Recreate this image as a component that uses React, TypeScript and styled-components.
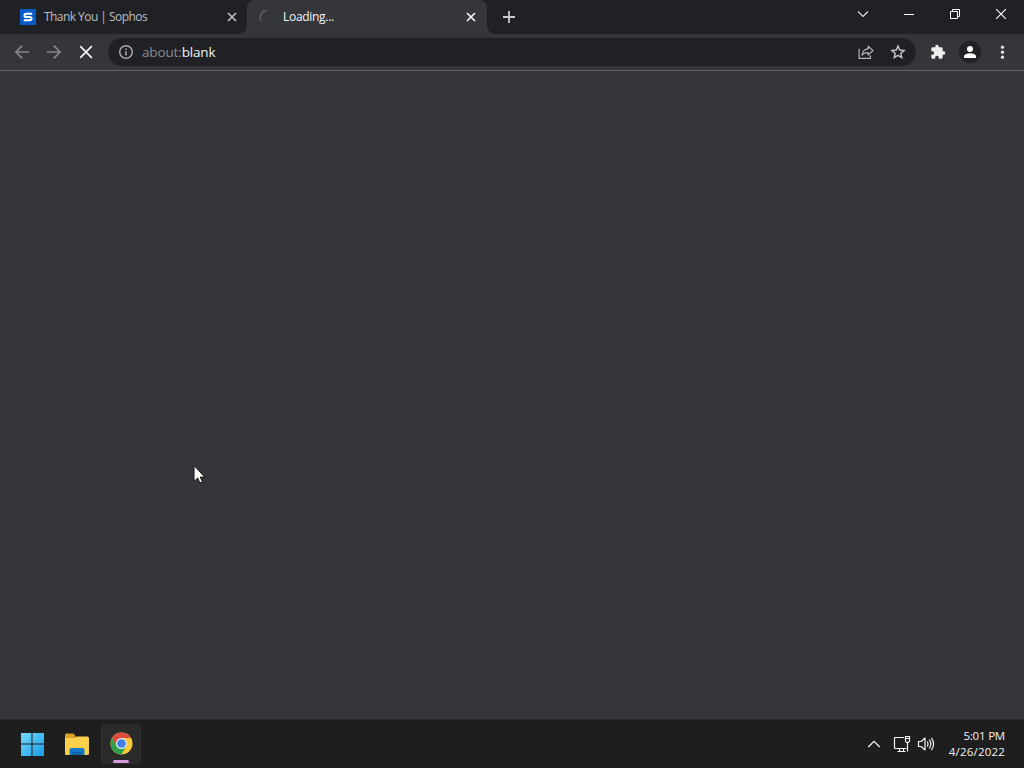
import React from "react";
import styled, { createGlobalStyle } from "styled-components";

const GlobalStyle = createGlobalStyle`
  * {
    box-sizing: border-box;
  }

  body {
    margin: 0;
    overflow: hidden;
    background: #35363a;
    font-family: "Open Sans", "Noto Sans", sans-serif;
    cursor: default;
  }
`;

const Desktop = styled.div`
  position: relative;
  display: flex;
  flex-direction: column;
  width: 1024px;
  height: 768px;
  overflow: hidden;
`;

/* ---------- tab strip ---------- */

const TabStrip = styled.div`
  display: flex;
  flex: none;
  height: 34px;
  background: #202124;
`;

const Tab = styled.div<{ $active?: boolean }>`
  position: relative;
  display: flex;
  align-items: center;
  width: ${(p) => (p.$active ? 240 : 247)}px;
  height: 34px;
  padding: ${(p) => (p.$active ? "0 8px 0 12px" : "0 7px 0 20px")};
  border-radius: 8px 8px 0 0;
  background: ${(p) => (p.$active ? "#35363a" : "transparent")};
  color: ${(p) => (p.$active ? "#f4f5f7" : "#b9bdc2")};

  /* flared feet of the selected tab */
  &::before,
  &::after {
    content: "";
    display: ${(p) => (p.$active ? "block" : "none")};
    position: absolute;
    bottom: 0;
    width: 8px;
    height: 8px;
  }

  &::before {
    left: -8px;
    background: radial-gradient(circle at 0 0, transparent 7.5px, #35363a 8px);
  }

  &::after {
    right: -8px;
    background: radial-gradient(circle at 100% 0, transparent 7.5px, #35363a 8px);
  }
`;

const TabIcon = styled.svg`
  flex: none;
  width: 16px;
  height: 16px;
  margin-right: 8px;
`;

const TabTitle = styled.span<{ $spacing: number }>`
  flex: 1;
  font-size: 12px;
  line-height: 16px;
  letter-spacing: ${(p) => p.$spacing}px;
  white-space: nowrap;
`;

const TabClose = styled.svg`
  flex: none;
  width: 16px;
  height: 16px;
  fill: none;
  stroke: currentColor;
  stroke-width: 1.7;
`;

const NewTab = styled.div`
  display: grid;
  place-items: center;
  width: 28px;
  height: 34px;
  margin-left: 8px;
`;

const WindowControls = styled.div`
  display: flex;
  margin-left: auto;
`;

const WindowButton = styled.div`
  display: grid;
  place-items: center;
  width: 46px;
  height: 28px;
`;

/* ---------- toolbar ---------- */

const Toolbar = styled.div`
  display: flex;
  align-items: center;
  flex: none;
  height: 37px;
  padding: 0 6px;
  border-bottom: 1px solid #626366;
  background: #35363a;
`;

const ToolButton = styled.div`
  display: grid;
  place-items: center;
  width: 32px;
  height: 32px;
`;

const Omnibox = styled.div`
  display: flex;
  align-items: center;
  flex: 1;
  height: 28px;
  margin: 0 6px;
  padding: 0 2px;
  border-radius: 14px;
  background: #202124;
`;

const Url = styled.span`
  flex: 1;
  font-size: 13.5px;
  line-height: 20px;
  letter-spacing: -0.15px;
  color: #898c90;

  b {
    font-weight: 400;
    color: #f1f3f4;
  }
`;

const Avatar = styled.div`
  display: grid;
  place-items: center;
  width: 22px;
  height: 22px;
  border-radius: 50%;
  background: #202124;
`;

const Icon = styled.svg<{ $size: number }>`
  display: block;
  width: ${(p) => p.$size}px;
  height: ${(p) => p.$size}px;
`;

/* ---------- page and taskbar ---------- */

const Page = styled.div`
  flex: 1;
  background: #35363a;
`;

const Taskbar = styled.div`
  display: flex;
  align-items: center;
  justify-content: space-between;
  flex: none;
  height: 49px;
  padding: 0 19px 1px 12px;
  border-top: 1px solid #29292a;
  background: #1e1e1e;
`;

const Pinned = styled.div`
  display: flex;
  gap: 4.5px;
`;

const PinnedApp = styled.div<{ $open?: boolean }>`
  position: relative;
  display: grid;
  place-items: center;
  width: 40px;
  height: 40px;
  border-radius: 4px;
  background: ${(p) => (p.$open ? "#2a2a2a" : "transparent")};
  box-shadow: ${(p) => (p.$open ? "inset 0 0 0 1px #2f2f2f" : "none")};
`;

const OpenMark = styled.span`
  position: absolute;
  bottom: 1px;
  left: 12px;
  width: 16px;
  height: 3px;
  border-radius: 2px;
  background: #d49bd8;
`;

const Tray = styled.div`
  display: flex;
  align-items: center;
  color: #f2f2f2;
`;

const TrayIcon = styled.svg<{ $gap: number }>`
  display: block;
  width: 18px;
  height: 18px;
  margin-right: ${(p) => p.$gap}px;
  fill: none;
  stroke: currentColor;
`;

const Clock = styled.div`
  width: 58px;
  font-size: 11.5px;
  line-height: 16px;
  letter-spacing: 0.2px;
  text-align: right;
  white-space: nowrap;

  div:first-child {
    letter-spacing: -0.2px;
  }
`;

const Pointer = styled.svg`
  position: absolute;
  left: 193px;
  top: 464px;
  width: 13px;
  height: 21px;
`;

const CloseGlyph = () => (
  <TabClose viewBox="0 0 16 16">
    <path d="M4 4l8 8M12 4l-8 8" />
  </TabClose>
);

const SophosIcon = () => (
  <TabIcon viewBox="0 0 16 16">
    <rect width="16" height="16" fill="#0b5bc7" />
    <path
      d="M12.2 4.8H6.1a1.6 1.6 0 0 0 0 3.2h3.8a1.6 1.6 0 0 1 0 3.2H3.8"
      fill="none"
      stroke="#fff"
      strokeWidth="2"
    />
  </TabIcon>
);

const ChromeIcon = () => (
  <Icon $size={23} viewBox="0 0 48 48">
    <circle cx="24" cy="24" r="23" fill="#fcc934" />
    <path d="M4.1 12.5A23 23 0 0 1 43.9 12.5H24L14 29.7z" fill="#dd4b3e" />
    <path d="M4.1 12.5A23 23 0 0 0 24 47L34 29.7 24 24 14 29.7z" fill="#2da04f" />
    <circle cx="24" cy="24" r="11.5" fill="#e8eef8" />
    <circle cx="24" cy="24" r="9" fill="#3f7fe8" />
  </Icon>
);

const App = () => {
  return (
    <Desktop>
      <GlobalStyle />
      <TabStrip>
        <Tab>
          <SophosIcon />
          <TabTitle $spacing={-0.55}>Thank You | Sophos</TabTitle>
          <CloseGlyph />
        </Tab>
        <Tab $active>
          <TabIcon viewBox="0 0 16 16" fill="none" stroke="#5d6064" strokeWidth="1.5">
            <path d="M2.2 12A7 7 0 0 1 7.5 1.6" />
          </TabIcon>
          <TabTitle $spacing={-0.3}>Loading...</TabTitle>
          <CloseGlyph />
        </Tab>
        <NewTab>
          <Icon $size={14} viewBox="0 0 14 14" stroke="#c8cacd" strokeWidth="1.8">
            <path d="M7 1v12M1 7h12" />
          </Icon>
        </NewTab>
        <WindowControls>
          <WindowButton>
            <Icon $size={12} viewBox="0 0 12 12" fill="none" stroke="#e4e5e7" strokeWidth="1.1">
              <path d="M1 3.5l5 5 5-5" />
            </Icon>
          </WindowButton>
          <WindowButton>
            <Icon $size={10} viewBox="0 0 10 10" stroke="#fff">
              <path d="M0 5.5h10" />
            </Icon>
          </WindowButton>
          <WindowButton>
            <Icon $size={10} viewBox="0 0 10 10" fill="none" stroke="#fff">
              <path d="M.5 2.5h7v7h-7zM2.5 2.5v-2h7v7h-2" />
            </Icon>
          </WindowButton>
          <WindowButton>
            <Icon $size={10} viewBox="0 0 10 10" stroke="#fff" strokeWidth="1.1">
              <path d="M0 0l10 10M10 0L0 10" />
            </Icon>
          </WindowButton>
        </WindowControls>
      </TabStrip>

      <Toolbar>
        <ToolButton>
          <Icon $size={16} viewBox="0 0 16 16" fill="none" stroke="#85878a" strokeWidth="1.7">
            <path d="M15 8H2M8.2 1.7L1.9 8l6.3 6.3" />
          </Icon>
        </ToolButton>
        <ToolButton>
          <Icon $size={16} viewBox="0 0 16 16" fill="none" stroke="#85878a" strokeWidth="1.7">
            <path d="M1 8h13M7.8 1.7L14.1 8l-6.3 6.3" />
          </Icon>
        </ToolButton>
        <ToolButton>
          <Icon $size={16} viewBox="0 0 16 16" fill="none" stroke="#f1f3f4" strokeWidth="1.7">
            <path d="M2.2 2.2l11.6 11.6M13.8 2.2L2.2 13.8" />
          </Icon>
        </ToolButton>
        <Omnibox>
          <ToolButton>
            <Icon $size={16} viewBox="0 0 16 16" fill="none" stroke="#a5a8ac" strokeWidth="1.5">
              <circle cx="8" cy="8" r="6.3" />
              <path d="M8 7.2v4.2M8 4.4v1.6" strokeWidth="1.6" />
            </Icon>
          </ToolButton>
          <Url>
            about:<b>blank</b>
          </Url>
          <ToolButton>
            <Icon $size={16} viewBox="0 0 16 16" fill="none" stroke="#b4b7bb" strokeWidth="1.2">
              <path d="M1.1 4.8v9.6h11.3v-3" />
              <path d="M10.2 2.2l4.8 4.4-4.8 4.4V8.6C7.4 8.5 5.4 9.3 4 11.2c.4-3.5 2.5-6 6.2-6.5z" strokeLinejoin="round" />
            </Icon>
          </ToolButton>
          <ToolButton>
            <Icon $size={16} viewBox="0 0 16 16" fill="none" stroke="#c3c5c8" strokeWidth="1.4">
              <path d="M8 2l1.7 4.05 4.4.4-3.3 2.9 1 4.3L8 11.4l-3.8 2.25 1-4.3-3.3-2.9 4.4-.4z" />
            </Icon>
          </ToolButton>
        </Omnibox>
        <ToolButton>
          <Icon $size={16} viewBox="0 0 24 24" fill="#eceef0">
            <path d="M20.5 11H19V7c0-1.1-.9-2-2-2h-4V3.5a2.5 2.5 0 0 0-5 0V5H4c-1.1 0-2 .9-2 2v3.8h1.5c1.5 0 2.7 1.2 2.7 2.7s-1.2 2.7-2.7 2.7H2V20c0 1.1.9 2 2 2h3.8v-1.5c0-1.5 1.2-2.7 2.7-2.7s2.7 1.2 2.7 2.7V22H17c1.1 0 2-.9 2-2v-4h1.5a2.5 2.5 0 0 0 0-5z" />
          </Icon>
        </ToolButton>
        <ToolButton>
          <Avatar>
            <Icon $size={12} viewBox="0 0 12 12" fill="#fff">
              <circle cx="6" cy="3" r="3" />
              <path d="M0 12v-1.7C0 8.2 3.5 7.2 6 7.2s6 1 6 3.1V12z" />
            </Icon>
          </Avatar>
        </ToolButton>
        <ToolButton>
          <Icon $size={16} viewBox="0 0 16 16" fill="#e8eaed">
            <circle cx="8.5" cy="3.2" r="1.6" />
            <circle cx="8.5" cy="8.2" r="1.6" />
            <circle cx="8.5" cy="13.2" r="1.6" />
          </Icon>
        </ToolButton>
      </Toolbar>

      <Page />

      <Taskbar>
        <Pinned>
          <PinnedApp>
            <Icon $size={24} viewBox="0 0 24 24">
              <defs>
                <linearGradient id="win" x1="0" y1="0" x2="24" y2="24" gradientUnits="userSpaceOnUse">
                  <stop offset="0" stopColor="#7bdcfb" />
                  <stop offset="1" stopColor="#159de9" />
                </linearGradient>
              </defs>
              <path d="M1 1h10.5v10.5H1zM12.5 1H24v10.5H12.5zM1 12.5h10.5V24H1zM12.5 12.5H24V24H12.5z" fill="url(#win)" />
            </Icon>
          </PinnedApp>
          <PinnedApp>
            <Icon $size={26} viewBox="0 0 26 26">
              <path d="M1 4Q1 2.5 2.500 2.500H9.500l2 2.500-2 3.500H1z" fill="#dda32b" />
              <path d="M1 7h9l2-1.500h11.500Q25 5.500 25 7v15.500q0 1.500-1.500 1.500h-21Q1 24 1 22.500z" fill="#fad04c" />
              <path d="M5.500 24v-5q0-2 2-2h11q2 0 2 2v5z" fill="#1678c8" />
              <path d="M8.500 24v-2q0-1 1-1h7q1 0 1 1v2z" fill="#0f62ac" />
            </Icon>
          </PinnedApp>
          <PinnedApp $open>
            <ChromeIcon />
            <OpenMark />
          </PinnedApp>
        </Pinned>
        <Tray>
          <TrayIcon $gap={10} viewBox="0 0 18 18" strokeWidth="1.3">
            <path d="M3.3 12L9 6.3l5.7 5.7" />
          </TrayIcon>
          <TrayIcon $gap={6} viewBox="0 0 18 18" strokeWidth="1.2">
            <path d="M11 2.500H2.500q-1 0-1 1v9q0 1 1 1h11M6.500 13.500v3M10.500 13.500v3M4.500 16.500h8" />
            <path d="M12.500 1.500h4v4.500l-1 1.500h-2l-1-1.500zM12.500 3.500h4M14.500 7.500v9" />
          </TrayIcon>
          <TrayIcon $gap={12} viewBox="0 0 18 18" strokeWidth="1.2">
            <path d="M1.500 6.500h2.700L8 3v12l-3.800-3.500H1.500z" strokeLinejoin="round" />
            <path d="M10.200 6.500q1.600 2.500 0 5M12.300 4.600q3 4.400 0 8.800M14.400 2.800q4.400 6.200 0 12.400" />
          </TrayIcon>
          <Clock>
            <div>5:01 PM</div>
            <div>4/26/2022</div>
          </Clock>
        </Tray>
      </Taskbar>

      <Pointer viewBox="0 0 13 21">
        <path
          d="M1 1.500v16l3.700-3.500 2.200 5 2.600-1.100-2.200-4.800h4.500z"
          fill="#fff"
          stroke="#111"
          strokeWidth="1"
        />
      </Pointer>
    </Desktop>
  );
};

export default App;
